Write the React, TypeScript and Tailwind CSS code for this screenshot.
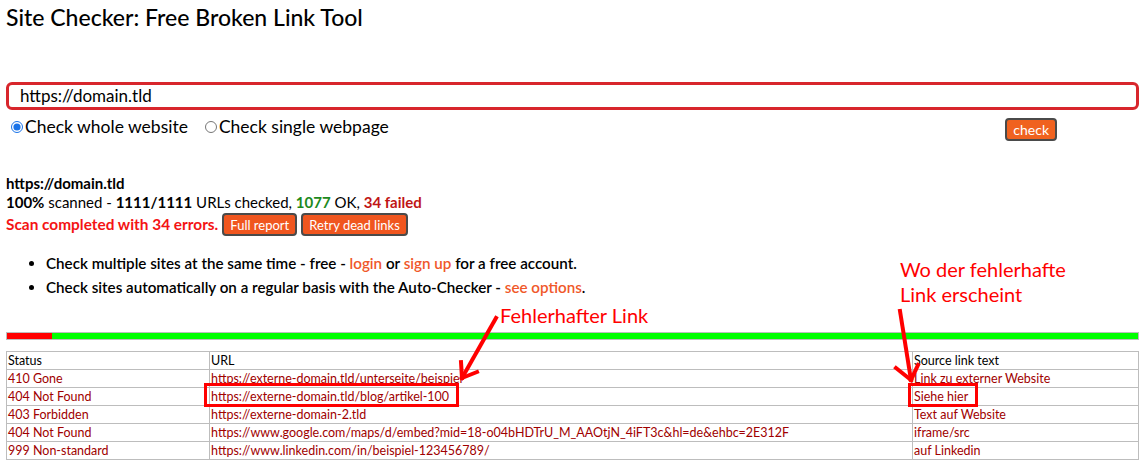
import React from 'react';

const rows = [
  { status: '410 Gone', url: 'https://externe-domain.tld/unterseite/beispiel', text: 'Link zu externer Website' },
  { status: '404 Not Found', url: 'https://externe-domain.tld/blog/artikel-100', text: 'Siehe hier' },
  { status: '403 Forbidden', url: 'https://externe-domain-2.tld', text: 'Text auf Website' },
  { status: '404 Not Found', url: 'https://www.google.com/maps/d/embed?mid=18-o04bHDTrU_M_AAOtjN_4iFT3c&hl=de&ehbc=2E312F', text: 'iframe/src' },
  { status: '999 Non-standard', url: 'https://www.linkedin.com/in/beispiel-123456789/', text: 'auf Linkedin' },
];

const App: React.FC = () => {
  return (
    <div className="relative w-[1146px] h-[464px] overflow-hidden bg-white text-black font-['Lato',sans-serif]">
      <div className="pl-[6px] pr-[7px]">
        <h1 className="pt-[3px] text-[23px] leading-[28px] font-medium">Site Checker: Free Broken Link Tool</h1>

        <div className="mt-[51px] h-[28px] rounded-[6px] border-[3px] border-[#d8262c] flex items-center pl-[11px] text-[17px]">
          https://domain.tld
        </div>

        <div className="flex items-start h-[40px]">
          <div className="flex items-center gap-[7px] pt-[7px] pl-[5px] text-[17.5px] leading-[20px]">
            <label className="flex items-center gap-[2px]">
              <input type="radio" name="mode" defaultChecked className="w-[12px] h-[12px] accent-[#1a73e8]" />
              Check whole website
            </label>
            <label className="flex items-center gap-[2px] ml-[10px]">
              <input type="radio" name="mode" className="w-[12px] h-[12px]" />
              Check single webpage
            </label>
          </div>
          <button className="ml-auto mr-[82px] mt-[8px] h-[23px] px-[6px] rounded-[4px] border-2 border-[#4a4a4a] bg-[#f0621f] text-white text-[14px] leading-[16px]">
            check
          </button>
        </div>

        <div className="mt-[24px] text-[15px] leading-[19px]">
          <div className="font-bold">https://domain.tld</div>
          <div>
            <b>100%</b> scanned - <b>1111/1111</b> URLs checked, <b className="text-[#1d8a1d]">1077</b> OK, <b className="text-[#c01515]">34 failed</b>
          </div>
          <div className="flex items-center gap-[4px] mt-[1px]">
            <span className="font-bold text-[15.4px] text-[#f41414]">Scan completed with 34 errors.</span>
            <button className="h-[23px] px-[6px] rounded-[4px] border-2 border-[#4a4a4a] bg-[#f0561f] text-white text-[13px] leading-[14px]">Full report</button>
            <button className="h-[23px] px-[6px] rounded-[4px] border-2 border-[#4a4a4a] bg-[#f0561f] text-white text-[13px] leading-[14px]">Retry dead links</button>
          </div>
        </div>

        <ul className="mt-[15px] pl-[40px] list-disc text-[15.2px] leading-[24px] font-semibold">
          <li>Check multiple sites at the same time - free - <span className="text-[#f0582a]">login</span> or <span className="text-[#f0582a]">sign up</span> for a free account.</li>
          <li>Check sites automatically on a regular basis with the Auto-Checker - <span className="text-[#f0582a]">see options</span>.</li>
        </ul>

        <div className="mt-[33px] h-[8px] border border-[#bdbdbd] flex">
          <div className="w-[45px] bg-[#ff0000]" />
          <div className="flex-1 bg-[#00ff00]" />
        </div>

        <table className="mt-[11px] w-full border-collapse text-[12.5px] leading-[17px]">
          <colgroup>
            <col className="w-[203px]" />
            <col className="w-[703px]" />
            <col />
          </colgroup>
          <tbody>
            <tr>
              <td className="border border-[#bdbdbd] pl-[1px] h-[18px]">Status</td>
              <td className="border border-[#bdbdbd] pl-[1px]">URL</td>
              <td className="border border-[#bdbdbd] pl-[1px]">Source link text</td>
            </tr>
            {rows.map((r, i) => (
              <tr key={i} className="text-[#a00000]">
                <td className="border border-[#bdbdbd] pl-[1px] h-[18px]">{r.status}</td>
                <td className="border border-[#bdbdbd] pl-[1px]">{r.url}</td>
                <td className="border border-[#bdbdbd] pl-[1px]">{r.text}</td>
              </tr>
            ))}
          </tbody>
        </table>
      </div>

      {/* annotations */}
      <div className="absolute left-[204px] top-[383px] w-[255px] h-[24px] border-[3px] border-[#ff0000]" />
      <div className="absolute left-[908px] top-[383px] w-[70px] h-[24px] border-[3px] border-[#ff0000]" />

      <div className="absolute left-[500px] top-[303px] text-[20px] leading-[24px] text-[#ff0000]">Fehlerhafter Link</div>
      <div className="absolute left-[900px] top-[257px] text-[20px] leading-[25px] text-[#ff0000]">
        Wo der fehlerhafte<br />Link erscheint
      </div>

      <svg className="absolute left-0 top-0" width="1146" height="464" viewBox="0 0 1146 464">
        <g stroke="#ff0000" strokeWidth="4" strokeLinecap="square" fill="none">
          <line x1="496" y1="318" x2="462" y2="378" />
          <line x1="462" y1="378" x2="461" y2="362" />
          <line x1="462" y1="378" x2="477" y2="372" />
          <line x1="900" y1="311" x2="911" y2="380" />
          <line x1="911" y1="380" x2="896" y2="368" />
          <line x1="911" y1="380" x2="918" y2="365" />
        </g>
      </svg>
    </div>
  );
};

export default App;
